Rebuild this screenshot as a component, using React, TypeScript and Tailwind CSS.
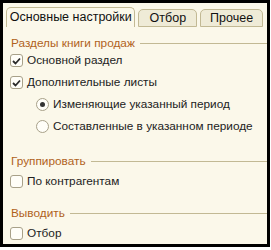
const font = { fontFamily: '"Liberation Sans", Arial, sans-serif' }

function Check({ checked }: { checked?: boolean }) {
  return (
    <span className="flex h-[13px] w-[13px] shrink-0 items-center justify-center rounded-[3px] border border-[#a8a189] bg-[#fffef8]">
      {checked && (
        <svg width="9" height="8" viewBox="0 0 9 8">
          <path d="M1 4 L3.5 6.5 L8 1.5" fill="none" stroke="#2a2a2a" strokeWidth="1.8" />
        </svg>
      )}
    </span>
  )
}

function Radio({ checked }: { checked?: boolean }) {
  return (
    <span className="flex h-[13px] w-[13px] shrink-0 items-center justify-center rounded-full border border-[#a8a189] bg-[#fffef8]">
      {checked && <span className="h-[5px] w-[5px] rounded-full bg-[#333]" />}
    </span>
  )
}

function Header({ title }: { title: string }) {
  return (
    <div className="flex items-center gap-[5px] pl-[8px]">
      <span className="text-[#b0621c]">{title}</span>
      <div className="h-px flex-1 bg-[#c2b994]" />
    </div>
  )
}

export default function App() {
  return (
    <div className="h-[250px] w-[271px] bg-white text-[11.8px] leading-[15px] text-[#222]" style={font}>
      <div className="flex h-[247px] w-[270px] flex-col border-[3px] border-black bg-[#fbf8ea]">
        {/* Tabs */}
        <div className="flex items-end gap-[3px] pl-[3px] pt-[4px] pr-[1px]">
          <div className="flex h-[20px] w-[130px] items-center justify-center rounded-t-[5px] border border-b-0 border-[#c2b994] bg-[#fbf8ea] text-[12.5px] text-[#111]">
            Основные настройки
          </div>
          <div className="flex h-[18px] w-[59px] items-center justify-center rounded-t-[5px] border border-[#c2b994] bg-[#efebd7] text-[12.5px] text-[#111]">
            Отбор
          </div>
          <div className="flex h-[18px] w-[63px] items-center justify-center rounded-t-[5px] border border-[#c2b994] bg-[#efebd7] text-[12.5px] text-[#111]">
            Прочее
          </div>
          <div className="h-px flex-1 bg-[#c2b994]" />
        </div>

        <div className="flex flex-col pt-[9px]">
          <Header title="Разделы книги продаж" />
          <div className="mt-[2px] flex flex-col gap-[7px] pl-[7px]">
            <label className="flex items-center gap-[4px]">
              <Check checked />
              <span>Основной раздел</span>
            </label>
            <label className="flex items-center gap-[4px]">
              <Check checked />
              <span>Дополнительные листы</span>
            </label>
            <label className="flex items-center gap-[4px] pl-[26px]">
              <Radio checked />
              <span>Изменяющие указанный период</span>
            </label>
            <label className="flex items-center gap-[4px] pl-[26px]">
              <Radio />
              <span>Составленные в указанном периоде</span>
            </label>
          </div>

          <div className="mt-[20px]">
            <Header title="Группировать" />
          </div>
          <label className="mt-[5px] flex items-center gap-[4px] pl-[7px]">
            <Check />
            <span>По контрагентам</span>
          </label>

          <div className="mt-[17px]">
            <Header title="Выводить" />
          </div>
          <label className="mt-[5px] flex items-center gap-[4px] pl-[7px]">
            <Check />
            <span>Отбор</span>
          </label>
        </div>
      </div>
    </div>
  )
}
